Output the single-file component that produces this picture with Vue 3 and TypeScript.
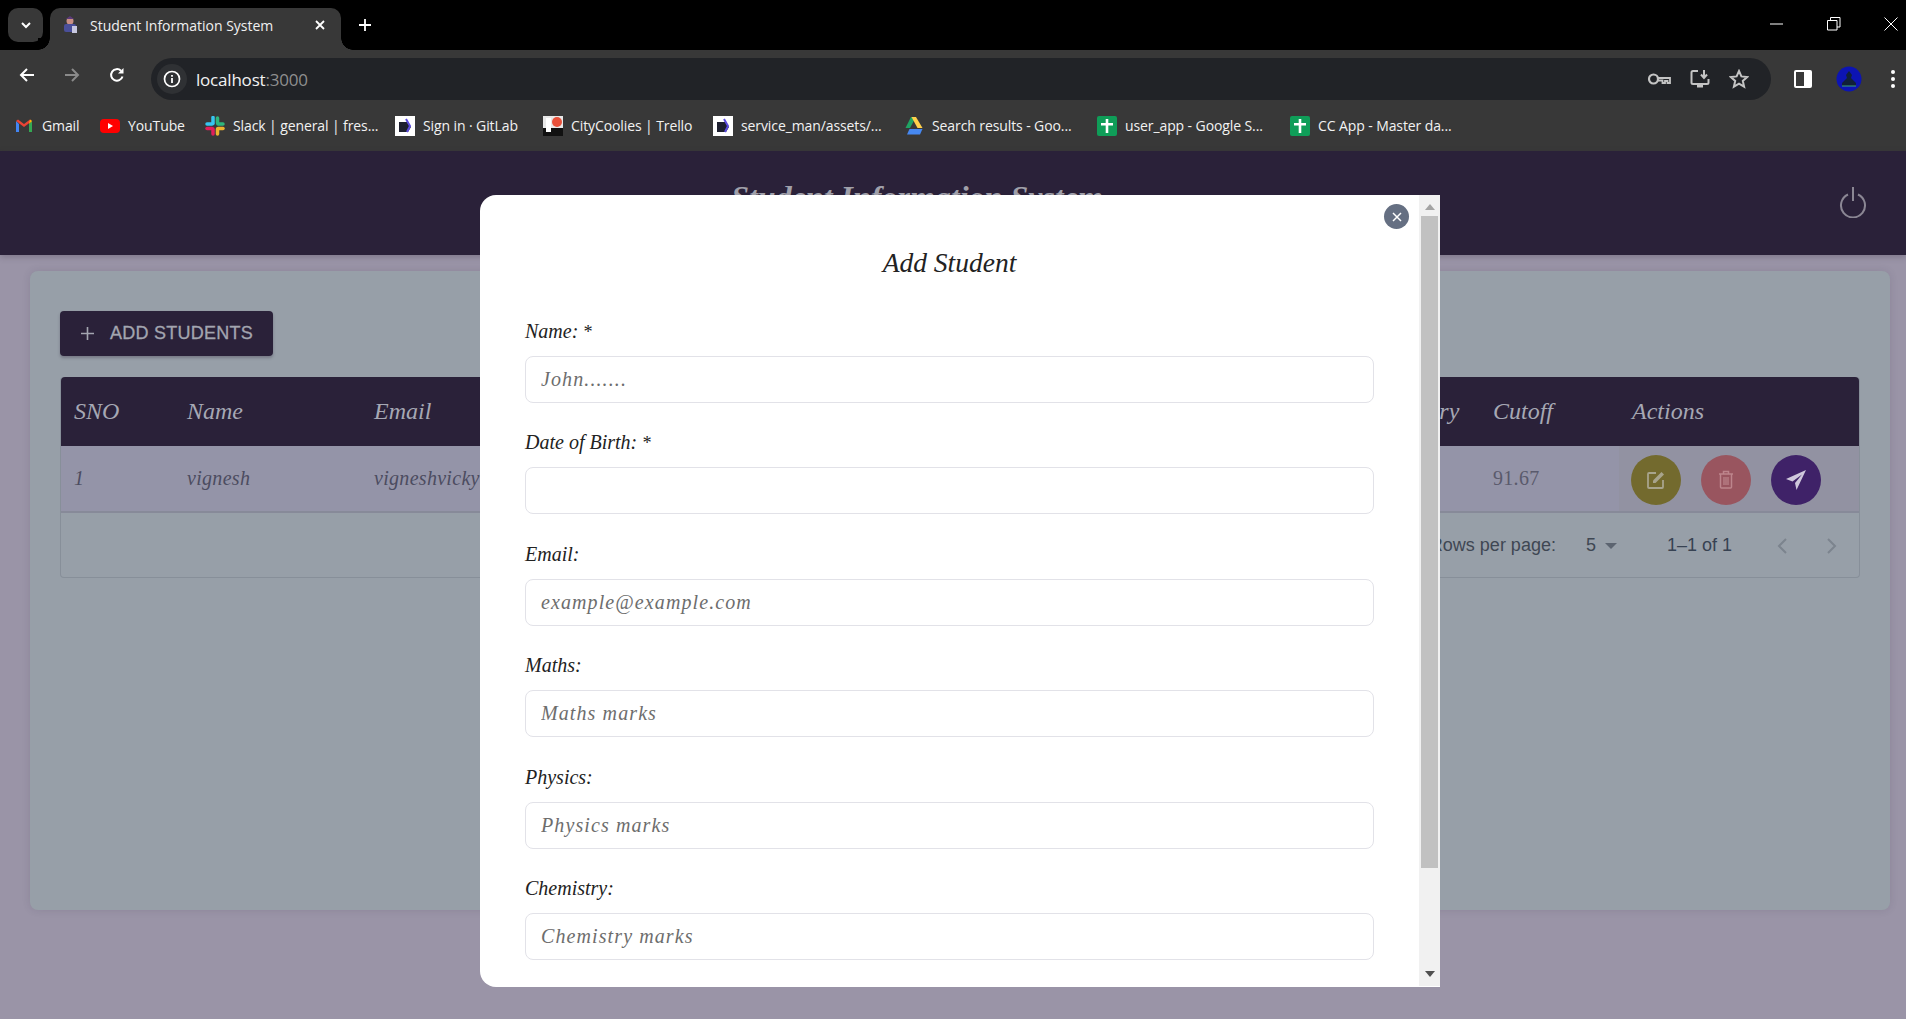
<script setup lang="ts">
interface Bookmark {
  label: string
  icon: string
  width: number
}

const bookmarks: Bookmark[] = [
  { label: 'Gmail', icon: 'gmail', width: 38 },
  { label: 'YouTube', icon: 'youtube', width: 57 },
  { label: 'Slack | general | fres...', icon: 'slack', width: 142 },
  { label: 'Sign in · GitLab', icon: 'doc', width: 100 },
  { label: 'CityCoolies | Trello', icon: 'city', width: 122 },
  { label: 'service_man/assets/...', icon: 'doc', width: 143 },
  { label: 'Search results - Goo...', icon: 'drive', width: 145 },
  { label: 'user_app - Google S...', icon: 'sheet', width: 145 },
  { label: 'CC App - Master da...', icon: 'sheet', width: 143 },
]

const columns = ['SNO', 'Name', 'Email', 'Date of Birth', 'Maths', 'Physics', 'Chemistry', 'Category', 'Cutoff', 'Actions']

interface Field {
  label: string
  placeholder: string
  required?: boolean
}

const fields: Field[] = [
  { label: 'Name:', placeholder: 'John.......', required: true },
  { label: 'Date of Birth:', placeholder: '', required: true },
  { label: 'Email:', placeholder: 'example@example.com' },
  { label: 'Maths:', placeholder: 'Maths marks' },
  { label: 'Physics:', placeholder: 'Physics marks' },
  { label: 'Chemistry:', placeholder: 'Chemistry marks' },
]
</script>

<template>
  <div class="screen">
    <div class="tabstrip">
      <div class="tab-search">
        <svg width="12" height="12" viewBox="0 0 12 12"><path d="M2 4l4 4 4-4" fill="none" stroke="#fff" stroke-width="2" /></svg>
      </div>
      <div class="tab">
        <svg class="tab-favicon" width="16" height="18" viewBox="0 0 16 18">
          <circle cx="8" cy="5" r="3.5" fill="#c98f86" />
          <path d="M4 3l4-3 4 3z" fill="#5a3a7a" />
          <rect x="2" y="8" width="12" height="8" rx="2" fill="#4a4f9a" />
          <rect x="10" y="10" width="5" height="7" fill="#c8c8e0" />
        </svg>
        <span class="tab-title">Student Information System</span>
        <svg class="tab-close" width="12" height="12" viewBox="0 0 12 12"><path d="M2 2l8 8M10 2l-8 8" stroke="#fff" stroke-width="1.8" /></svg>
      </div>
      <svg class="new-tab" width="14" height="14" viewBox="0 0 14 14"><path d="M7 1v12M1 7h12" stroke="#fff" stroke-width="1.8" /></svg>
      <div class="window-controls">
        <svg width="14" height="14" viewBox="0 0 14 14"><path d="M0 7h13" stroke="#fff" /></svg>
        <svg width="14" height="14" viewBox="0 0 14 14"><path d="M.5 3.5h9.500v9.500h-9.500zM3.500 3.500v-3h9.500v9.500h-3" fill="none" stroke="#fff" /></svg>
        <svg width="14" height="14" viewBox="0 0 14 14"><path d="M.5.5l13 13M13.500.5l-13 13" stroke="#fff" /></svg>
      </div>
    </div>

    <div class="toolbar">
      <svg class="nav-icon" width="16" height="16" viewBox="0 0 16 16"><path d="M15 8H2M8 2L2 8l6 6" fill="none" stroke="#fff" stroke-width="2" /></svg>
      <svg class="nav-icon" width="16" height="16" viewBox="0 0 16 16"><path d="M1 8h13M8 2l6 6-6 6" fill="none" stroke="#8a8a8a" stroke-width="2" /></svg>
      <svg class="nav-icon" width="16" height="16" viewBox="0 0 16 16"><path d="M13.500 9.500A5.800 5.800 0 1 1 12 3.800" fill="none" stroke="#fff" stroke-width="2" /><path d="M14.500 1v5.500H9z" fill="#fff" /></svg>
      <div class="omnibox">
        <span class="site-info">
          <svg width="18" height="18" viewBox="0 0 18 18"><circle cx="9" cy="9" r="7.500" fill="none" stroke="#fff" stroke-width="1.700" /><path d="M9 8v5M9 5v1.800" stroke="#fff" stroke-width="1.800" /></svg>
        </span>
        <span class="url">localhost<span class="url-port">:3000</span></span>
        <div class="omnibox-actions">
          <svg width="24" height="14" viewBox="0 0 24 14"><circle cx="6.500" cy="7" r="4.500" fill="none" stroke="#c4c4c4" stroke-width="2.200" /><path d="M11 6h12v5h-2.500V9H18v2h-2.500V8.500H11" fill="none" stroke="#c4c4c4" stroke-width="1.800" /></svg>
          <svg width="20" height="20" viewBox="0 0 20 20"><path d="M8 2H3a1.500 1.500 0 0 0-1.500 1.500v10A1.500 1.500 0 0 0 3 15h14a1.500 1.500 0 0 0 1.500-1.500V10" fill="none" stroke="#c4c4c4" stroke-width="2" /><path d="M7 16h6v2.500H7z" fill="#c4c4c4" /><path d="M14 1v7M11 5.500l3 3.500 3-3.500" fill="none" stroke="#c4c4c4" stroke-width="2" /></svg>
          <svg width="20" height="20" viewBox="0 0 20 20"><path d="M10 2l2.400 5.400 5.800.6-4.400 3.900 1.300 5.700L10 14.600 4.900 17.600l1.300-5.700L1.800 8l5.800-.6z" fill="none" stroke="#c4c4c4" stroke-width="2" /></svg>
        </div>
      </div>
      <div class="toolbar-end">
        <svg width="18" height="18" viewBox="0 0 18 18"><rect x="0" y="0" width="18" height="18" rx="2" fill="#fff" /><rect x="2" y="2" width="8" height="14" fill="#383838" /></svg>
        <svg width="26" height="26" viewBox="0 0 26 26">
          <circle cx="13" cy="13" r="12.500" fill="#0c14b4" />
          <path d="M13 5l3 4-1 3 5 5v3H6v-3l5-5-1-3z" fill="#10203a" />
          <path d="M6 20h14" stroke="#3aa07a" />
        </svg>
        <svg class="menu-dots" width="4" height="18" viewBox="0 0 4 18"><circle cx="2" cy="2" r="2" fill="#fff" /><circle cx="2" cy="9" r="2" fill="#fff" /><circle cx="2" cy="16" r="2" fill="#fff" /></svg>
      </div>
    </div>

    <div class="bookmarks">
      <div v-for="mark in bookmarks" :key="mark.label" class="bookmark">
        <svg v-if="mark.icon === 'gmail'" width="20" height="20" viewBox="0 0 20 20">
          <path d="M2 5v11h3V8z" fill="#4285f4" /><path d="M18 5v11h-3V8z" fill="#34a853" />
          <path d="M2 5l8 6 8-6-2-1.500-6 4.500-6-4.500z" fill="#ea4335" /><path d="M16 3.500L18 5l-3 3z" fill="#fbbc04" />
        </svg>
        <svg v-else-if="mark.icon === 'youtube'" width="20" height="20" viewBox="0 0 20 20">
          <rect x="0" y="3" width="20" height="14" rx="4" fill="#f00" /><path d="M8 7l5 3-5 3z" fill="#fff" />
        </svg>
        <svg v-else-if="mark.icon === 'slack'" width="20" height="20" viewBox="0 0 20 20">
          <path d="M8 1.500v6" stroke="#36c5f0" stroke-width="3.500" stroke-linecap="round" /><path d="M2 8h5" stroke="#36c5f0" stroke-width="3.500" stroke-linecap="round" />
          <path d="M12.500 2v5" stroke="#2eb67d" stroke-width="3.500" stroke-linecap="round" /><path d="M13 8h5" stroke="#2eb67d" stroke-width="3.500" stroke-linecap="round" />
          <path d="M12.500 13v5" stroke="#ecb22e" stroke-width="3.500" stroke-linecap="round" /><path d="M13 12.500h5" stroke="#ecb22e" stroke-width="3.500" stroke-linecap="round" />
          <path d="M8 13v5" stroke="#e01e5a" stroke-width="3.500" stroke-linecap="round" /><path d="M2 12.500h5" stroke="#e01e5a" stroke-width="3.500" stroke-linecap="round" />
        </svg>
        <svg v-else-if="mark.icon === 'doc'" width="20" height="20" viewBox="0 0 20 20">
          <rect width="20" height="20" fill="#fff" /><path d="M4 6h8l4 5-3 5H4z" fill="#1e2030" /><path d="M11 3l4 7-3 6" fill="none" stroke="#5b4be0" stroke-width="2" />
        </svg>
        <svg v-else-if="mark.icon === 'city'" width="20" height="20" viewBox="0 0 20 20">
          <rect width="20" height="20" fill="#e8e8e8" /><rect x="0" y="12" width="20" height="8" fill="#111" /><rect x="3" y="2" width="5" height="14" fill="#fff" /><circle cx="14" cy="6" r="5" fill="#e8503a" />
        </svg>
        <svg v-else-if="mark.icon === 'drive'" width="20" height="20" viewBox="0 0 20 20">
          <path d="M7 1h5L6 12H1.500z" fill="#1fa463" /><path d="M12 1l6.500 11H13.500L7.500 1z" fill="#ffd04b" /><path d="M5.500 13h13l-2.500 5.500H3z" fill="#4688f1" />
        </svg>
        <svg v-else width="20" height="20" viewBox="0 0 20 20">
          <rect width="20" height="20" rx="2" fill="#0f9d58" /><path d="M8.700 3h2.600v4h4.700v2.500h-4.700V17H8.700V9.500H4V7h4.700z" fill="#fff" />
        </svg>
        <span :style="{ width: mark.width + 'px' }">{{ mark.label }}</span>
      </div>
    </div>

    <div class="page">
      <header class="app-header">
        <h1>Student Information System</h1>
        <svg class="power" width="28" height="32" viewBox="0 0 28 32">
          <path d="M14 1v14" stroke="#8b8794" stroke-width="2" />
          <path d="M9 8.500a12 12 0 1 0 10 0" fill="none" stroke="#8b8794" stroke-width="2" />
        </svg>
      </header>

      <main class="content">
        <section class="card">
          <button class="add-btn">
            <svg width="15" height="15" viewBox="0 0 15 15"><path d="M7.500 1v13M1 7.500h13" stroke="#a3a5b0" stroke-width="1.600" /></svg>
            ADD STUDENTS
          </button>

          <div class="table-wrap">
            <table>
              <colgroup>
                <col class="c-sno" /><col class="c-name" /><col class="c-email" /><col class="c-dob" /><col class="c-mark" />
                <col class="c-mark" /><col class="c-chem" /><col class="c-cat" /><col class="c-cut" /><col />
              </colgroup>
              <thead>
                <tr><th v-for="col in columns" :key="col">{{ col }}</th></tr>
              </thead>
              <tbody>
                <tr>
                  <td>1</td>
                  <td>vignesh</td>
                  <td>vigneshvicky@gmail.com</td>
                  <td></td><td></td><td></td><td></td><td></td>
                  <td class="cutoff">91.67</td>
                  <td class="actions">
                    <span class="round edit">
                      <svg width="20" height="20" viewBox="0 0 20 20">
                        <path d="M10 3H3a1 1 0 0 0-1 1v13a1 1 0 0 0 1 1h13a1 1 0 0 0 1-1v-7" fill="none" stroke="#a8a48c" stroke-width="1.800" />
                        <path d="M7 10.500L15.500 2 18 4.500 9.500 13H7z" fill="#a8a48c" />
                      </svg>
                    </span>
                    <span class="round trash">
                      <svg width="16" height="19" viewBox="0 0 16 19">
                        <path d="M1 4h14M5.500 4V1.500h5V4" fill="none" stroke="#bd858c" stroke-width="1.500" />
                        <path d="M2.500 4v13a1 1 0 0 0 1 1h9a1 1 0 0 0 1-1V4" fill="none" stroke="#bd858c" stroke-width="1.500" />
                        <path d="M6 7v8M8 7v8M10 7v8" stroke="#bd858c" stroke-width="1.200" />
                      </svg>
                    </span>
                    <span class="round send">
                      <svg width="20" height="20" viewBox="0 0 20 20"><path d="M20 0L0 9l6.500 2.500L16 4.500 9 13l1.500 7z" fill="#cfc8dc" /></svg>
                    </span>
                  </td>
                </tr>
              </tbody>
            </table>
            <div class="pager">
              <span class="rows-label">Rows per page:</span>
              <span class="rows-value">5</span>
              <svg width="12" height="6" viewBox="0 0 12 6"><path d="M0 0h12L6 6z" fill="#5c6470" /></svg>
              <span class="range">1–1 of 1</span>
              <svg class="chev" width="10" height="16" viewBox="0 0 10 16"><path d="M9 1L2 8l7 7" fill="none" stroke="#7c848e" stroke-width="2" /></svg>
              <svg class="chev" width="10" height="16" viewBox="0 0 10 16"><path d="M1 1l7 7-7 7" fill="none" stroke="#7c848e" stroke-width="2" /></svg>
            </div>
          </div>
        </section>
      </main>

      <div class="modal">
        <div class="modal-body">
          <h2>Add Student</h2>
          <div v-for="field in fields" :key="field.label" class="field">
            <label>{{ field.label }}<span v-if="field.required" class="req"> *</span></label>
            <input type="text" :placeholder="field.placeholder" />
          </div>
        </div>
        <button class="close">
          <svg width="10" height="10" viewBox="0 0 10 10"><path d="M1 1l8 8M9 1L1 9" stroke="#fff" stroke-width="1.500" /></svg>
        </button>
        <div class="scrollbar">
          <svg class="arrow" width="10" height="6" viewBox="0 0 10 6"><path d="M5 0l5 6H0z" fill="#a3a3a3" /></svg>
          <div class="thumb"></div>
          <svg class="arrow" width="10" height="6" viewBox="0 0 10 6"><path d="M0 0h10L5 6z" fill="#505050" /></svg>
        </div>
      </div>
    </div>
  </div>
</template>

<style scoped>
.screen {
  height: 1019px;
  display: flex;
  flex-direction: column;
  overflow: hidden;
  font-family: "Liberation Sans", Arial, sans-serif;
}

/* browser chrome */
.tabstrip {
  height: 50px;
  background: #000;
  display: flex;
  align-items: flex-end;
  position: relative;
}
.tab-search {
  width: 35px;
  height: 34px;
  margin: 0 7px 8px 8px;
  border-radius: 10px;
  background: #383838;
  display: flex;
  align-items: center;
  justify-content: center;
}
.tab {
  width: 291px;
  height: 42px;
  background: #383838;
  border-radius: 10px 10px 0 0;
  display: flex;
  align-items: center;
  padding: 0 15px 8px 12px;
  box-sizing: border-box;
  color: #f0f0f0;
  position: relative;
}
.tab::before,
.tab::after {
  content: "";
  position: absolute;
  bottom: 0;
  width: 12px;
  height: 12px;
}
.tab::before {
  left: -12px;
  background: radial-gradient(circle at 0 0, #000 11.5px, #383838 12px);
}
.tab::after {
  right: -12px;
  background: radial-gradient(circle at 100% 0, #000 11.5px, #383838 12px);
}
.tab-favicon {
  flex: none;
}
.tab-title {
  margin-left: 12px;
  font: 14px "Open Sans", sans-serif;
  flex: 1;
  white-space: nowrap;
}
.new-tab {
  margin: 0 0 18px 17px;
}
.window-controls {
  margin-left: auto;
  display: flex;
  gap: 43px;
  padding: 0 8px 19px 0;
}
.toolbar {
  height: 50px;
  background: #383838;
  display: flex;
  align-items: center;
  padding-left: 19px;
}
.nav-icon {
  margin-right: 29px;
  flex: none;
}
.omnibox {
  margin: 8px 0 0 -3px;
  width: 1620px;
  height: 42px;
  background: #212327;
  border-radius: 21px;
  display: flex;
  align-items: center;
  padding: 0 22px 0 6px;
  box-sizing: border-box;
}
.site-info {
  width: 30px;
  height: 30px;
  border-radius: 50%;
  background: #2f3134;
  display: flex;
  align-items: center;
  justify-content: center;
}
.url {
  margin-left: 9px;
  font: 17px "Open Sans", sans-serif;
  letter-spacing: -0.2px;
  color: #f2f2f2;
}
.url-port {
  color: #8f8f8f;
}
.omnibox-actions {
  margin-left: auto;
  display: flex;
  align-items: center;
  gap: 19px;
}
.toolbar-end {
  display: flex;
  align-items: center;
  gap: 24px;
  margin: 8px 0 0 23px;
}
.menu-dots {
  margin-left: 5px;
}
.bookmarks {
  height: 51px;
  background: #383838;
  display: flex;
  align-items: center;
  padding: 0 0 0 14px;
  box-sizing: border-box;
}
.bookmark {
  display: flex;
  align-items: center;
  gap: 8px;
  margin-right: 20px;
  color: #f2f2f2;
  font: 14px "Open Sans", sans-serif;
  letter-spacing: -0.1px;
  white-space: nowrap;
}

/* app */
.page {
  flex: 1;
  position: relative;
  background: #9a94a7;
}
.app-header {
  height: 104px;
  background: #2a2139;
  display: flex;
  align-items: center;
  justify-content: center;
  padding-right: 72px;
  box-sizing: border-box;
  position: relative;
  box-shadow: 0 2px 6px rgba(42, 33, 57, 0.25);
}
.app-header h1 {
  margin: 0 0 12px;
  font: italic bold 32px "Liberation Serif", serif;
  color: #a0a0aa;
}
.power {
  position: absolute;
  right: 39px;
  top: 35px;
}
.content {
  padding: 16px 16px 0 30px;
}
.card {
  height: 639px;
  background: #979fa8;
  border-radius: 8px;
  padding: 40px 30px 0;
  box-sizing: border-box;
  box-shadow: 0 0 8px rgba(42, 33, 57, 0.12);
}
.add-btn {
  width: 213px;
  height: 45px;
  display: flex;
  align-items: center;
  gap: 15px;
  padding: 0 0 0 20px;
  background: #2a2139;
  color: #a3a5b0;
  border: none;
  border-radius: 4px;
  font: 18px "Liberation Sans", Arial, sans-serif;
  letter-spacing: 0.25px;
  -webkit-text-stroke: 0.3px #a3a5b0;
  box-shadow: 0 2px 3px rgba(42, 33, 57, 0.3);
}
.table-wrap {
  margin-top: 21px;
  width: 1800px;
  height: 201px;
  border: 1px solid #878f99;
  border-top: none;
  border-radius: 4px;
  box-sizing: border-box;
}
table {
  width: 100%;
  table-layout: fixed;
  border-collapse: collapse;
}
.c-sno { width: 113px; }
.c-name { width: 187px; }
.c-email { width: 440px; }
.c-dob { width: 160px; }
.c-mark { width: 125px; }
.c-chem { width: 146px; }
.c-cat { width: 123px; }
.c-cut { width: 139px; }
th {
  height: 69px;
  background: #2a2139;
  color: #a6a8b4;
  font: italic 24px "Liberation Serif", serif;
  text-align: left;
  padding: 0 0 0 13px;
  white-space: nowrap;
}
th:first-child {
  border-top-left-radius: 4px;
}
th:last-child {
  border-top-right-radius: 4px;
}
td {
  height: 66px;
  padding: 0 0 0 13px;
  background: #9494a8;
  border-bottom: 2px solid #878a99;
  color: #4c4c60;
  font: italic 20px "Liberation Serif", serif;
  letter-spacing: 0.3px;
  white-space: nowrap;
  overflow: hidden;
  box-sizing: border-box;
}
td.cutoff {
  font-style: normal;
  color: #5a5a6c;
}
td.actions {
  background: #9292a2;
  padding: 2px 0 0 12px;
}
.round {
  display: inline-flex;
  width: 50px;
  height: 50px;
  margin-right: 20px;
  border-radius: 50%;
  align-items: center;
  justify-content: center;
  vertical-align: middle;
}
.edit { background: #736a2e; }
.trash { background: #99555f; }
.send { background: #3f2268; }
.pager {
  height: 65px;
  display: flex;
  align-items: center;
  justify-content: flex-end;
  color: #3f4753;
  font-size: 18px;
}
.rows-value {
  margin: 0 9px 0 30px;
}
.range {
  margin: 0 45px 0 50px;
  color: #374252;
}
.chev {
  margin-right: 40px;
}
.chev:last-child {
  margin-right: 22px;
}

/* modal */
.modal {
  position: absolute;
  left: 480px;
  top: 44px;
  width: 960px;
  height: 792px;
  background: #fff;
  border-radius: 16px 0 0 16px;
  overflow: hidden;
}
.modal-body {
  padding: 0 66px 0 45px;
}
h2 {
  margin: 0;
  padding: 53px 0 39.500px;
  height: 30px;
  text-align: center;
  font: italic 27.500px/30px "Liberation Serif", serif;
  color: #222;
}
.field {
  height: 111.500px;
}
.field label {
  display: block;
  height: 48px;
  padding-top: 1px;
  font: italic 20px/24px "Liberation Serif", serif;
  color: #222;
}
.req {
  font-size: 18px;
}
.field input {
  display: block;
  width: 100%;
  height: 47px;
  margin-top: -11px;
  padding: 0 15px;
  box-sizing: border-box;
  border: 1px solid #e2e2e8;
  border-radius: 8px;
  outline: none;
  background: #fff;
  font: italic 20px "Liberation Serif", serif;
  letter-spacing: 1.100px;
}
.field input::placeholder {
  color: #6d6d6d;
  opacity: 1;
}
.close {
  position: absolute;
  left: 904px;
  top: 9px;
  width: 25px;
  height: 25px;
  padding: 0;
  border: none;
  border-radius: 50%;
  background: #656f82;
  display: flex;
  align-items: center;
  justify-content: center;
}
.scrollbar {
  position: absolute;
  right: 0;
  top: 0;
  width: 21px;
  height: 791px;
  background: #f1f1f1;
  display: flex;
  flex-direction: column;
  align-items: center;
}
.arrow {
  flex: none;
  margin: 9px 0 6px;
}
.thumb {
  width: 17px;
  height: 652px;
  flex: none;
  background: #c1c1c1;
  margin-bottom: 94px;
}
</style>

<style>
html,
body {
  margin: 0;
  overflow: hidden;
}
</style>
